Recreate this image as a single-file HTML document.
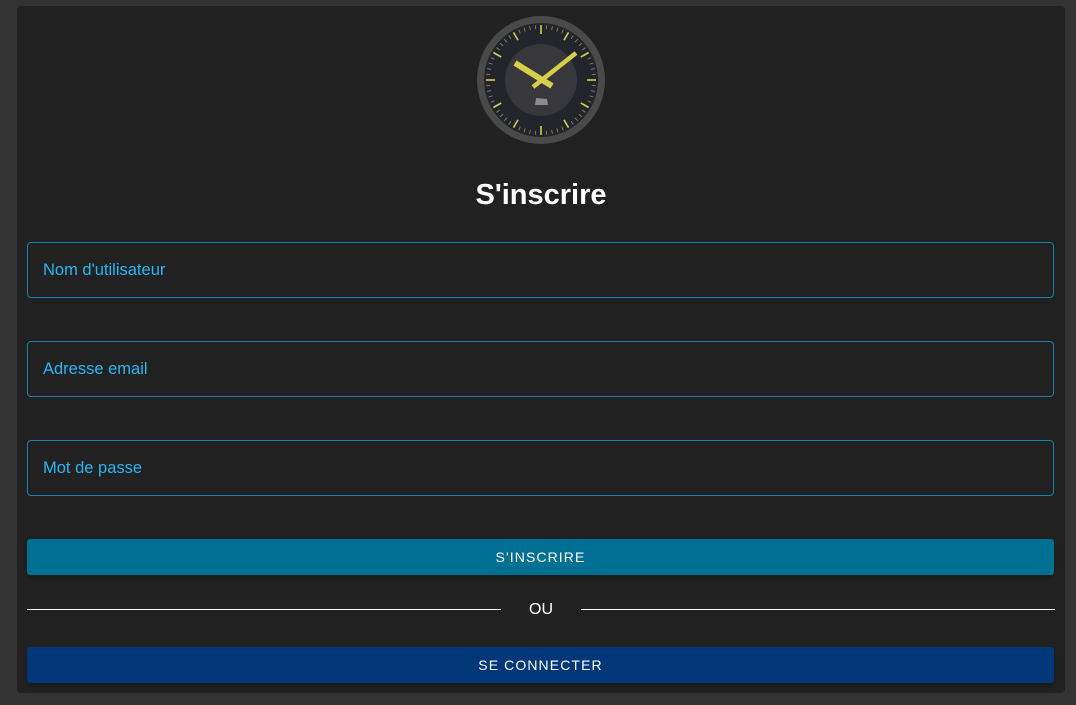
<!DOCTYPE html>
<html><head><meta charset="utf-8"><style>
html,body{margin:0;padding:0}
body{width:1076px;height:705px;background:#333;font-family:"Liberation Sans",sans-serif;position:relative;overflow:hidden}
.card{position:absolute;left:17px;top:6px;width:1048px;height:687px;background:#212121;border-radius:4px}
.clock{position:absolute;left:476px;top:15px}
h1{position:absolute;left:0;width:1082px;top:175px;margin:0;text-align:center;color:#fff;font-size:29px;font-weight:bold;line-height:40px}
.inp{position:absolute;left:27px;width:1025px;height:54px;border:1px solid #1581ac;border-radius:4px;box-sizing:content-box}
.inp span{position:absolute;left:15px;top:18px;color:#29b6f6;font-size:16.5px;line-height:19px}
.btn{position:absolute;left:27px;width:1027px;height:36px;border-radius:3px;color:#fff;font-size:14px;letter-spacing:1.1px;text-align:center;line-height:36px;box-shadow:0 2px 3px rgba(0,0,0,.3)}
.line{position:absolute;top:609px;height:1px;background:#fff}
.ou{position:absolute;left:0;width:1082px;text-align:center;top:601px;color:#fff;font-size:16px}
</style></head><body>
<div class="card"></div>
<svg class="clock" width="130" height="130" viewBox="0 0 130 130">
<circle cx="65" cy="65" r="64" fill="#4a4a4a"/>
<circle cx="65" cy="65" r="57" fill="#22252c"/>
<circle cx="65" cy="65" r="36" fill="#38383c"/>
<g id="ticks"></g>
<path d="M60 83 L71 84 L72 90 L59 90 Z" fill="#8a8a8a"/>
<line x1="39" y1="48" x2="76" y2="71" stroke="#d6cf4a" stroke-width="6"/>
<line x1="57" y1="72" x2="100" y2="38" stroke="#d6cf4a" stroke-width="4.5"/>
</svg>
<h1>S'inscrire</h1>
<div class="inp" style="top:242px"><span>Nom d'utilisateur</span></div>
<div class="inp" style="top:341px"><span>Adresse email</span></div>
<div class="inp" style="top:440px"><span>Mot de passe</span></div>
<div class="btn" style="top:539px;background:#006f94">S'INSCRIRE</div>
<div class="line" style="left:27px;width:474px"></div>
<div class="line" style="left:581px;width:474px"></div>
<div class="ou">OU</div>
<div class="btn" style="top:647px;background:#003778">SE CONNECTER</div>
<script>
var g=document.getElementById('ticks'),s='';
for(var i=0;i<60;i++){var a=i*6*Math.PI/180,h=i%5==0,r1=h?46:51,r2=55;
var x1=65+r1*Math.sin(a),y1=65-r1*Math.cos(a),x2=65+r2*Math.sin(a),y2=65-r2*Math.cos(a);
s+='<line x1="'+x1+'" y1="'+y1+'" x2="'+x2+'" y2="'+y2+'" stroke="'+(h?'#d6cf4a':'#8a8660')+'" stroke-width="'+(h?1.6:0.9)+'"/>';}
g.innerHTML=s;
</script>
</body></html>
